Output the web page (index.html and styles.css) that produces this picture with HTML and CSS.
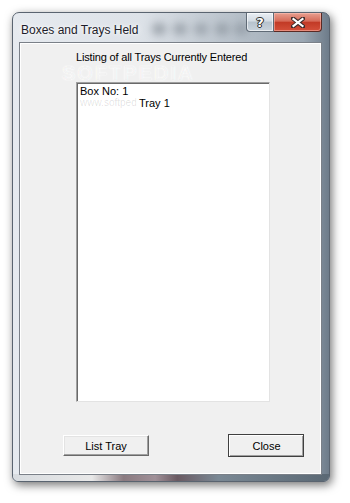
FILE: index.html
```html
<!DOCTYPE html>
<html>
<head>
<meta charset="utf-8">
<link rel="stylesheet" href="styles.css">
</head>
<body>
<div class="window">
  <div class="titlebar">
    <span class="title">Boxes and Trays Held</span>
    <div class="glass-blur"></div>
    <div class="caption-buttons">
      <div class="cap help"><span class="help-glyph">?</span></div>
      <div class="cap close">
        <svg width="14" height="11" viewBox="0 0 14 11">
          <path d="M2 1.5 L12 9.5 M12 1.5 L2 9.5" stroke="#3a2a2a" stroke-width="4.2" stroke-linecap="square"/>
          <path d="M2.5 2 L11.5 9 M11.5 2 L2.5 9" stroke="#ffffff" stroke-width="2.2" stroke-linecap="square"/>
        </svg>
      </div>
    </div>
  </div>
  <div class="client">
    <div class="heading">Listing of all Trays Currently Entered</div>
    <div class="wm-big">SOFTPEDIA</div>
    <div class="listbox">
      <div class="row">Box No: 1</div>
      <div class="row sub"><span class="wm-small">www.softped</span><span class="tray">Tray 1</span></div>
    </div>
    <div class="buttons">
      <button class="btn list">List Tray</button>
      <button class="btn default">Close</button>
    </div>
  </div>
</div>
</body>
</html>
```
FILE: styles.css
```css
html, body {
  margin: 0;
  padding: 0;
  background: #ffffff;
  width: 350px;
  height: 503px;
  overflow: hidden;
}
body {
  padding: 12px 0 0 12px;
  box-sizing: border-box;
}
.window {
  width: 318px;
  height: 470px;
  box-sizing: border-box;
  border: 1px solid #5a6470;
  border-radius: 7px 7px 6px 6px;
  background: linear-gradient(to right, #e6eaef 0%, #dde2e8 40%, #b8c1ca 70%, #9aa6b2 92%, #6e7c8a 100%);
  box-shadow: 2px 3px 10px rgba(0,0,0,0.55);
  display: flex;
  flex-direction: column;
  padding: 0 7px 6px 6px;
  position: relative;
}
.window::after {
  content: "";
  position: absolute;
  left: 0; right: 0; bottom: 0; height: 7px;
  border-radius: 0 0 6px 6px;
  background: linear-gradient(to right, #d8dce0 0%, #e8e8e8 25%, #8a7a80 35%, #a09098 45%, #6a5a62 52%, #7a8894 65%, #5a6874 100%);
  z-index: 0;
}
.titlebar {
  height: 29px;
  display: flex;
  align-items: flex-start;
  position: relative;
}
.title {
  font-family: "Liberation Sans", Arial, sans-serif;
  font-size: 12px;
  color: #1c1c2a;
  margin-top: 10px;
  margin-left: 2px;
  text-shadow: 0 0 6px #ffffff, 0 0 3px #ffffff;
  white-space: nowrap;
  position: relative;
  z-index: 1;
}
.glass-blur {
  position: absolute;
  left: 128px;
  top: 5px;
  width: 104px;
  height: 22px;
  background:
    radial-gradient(ellipse 11px 10px at 12px 11px, rgba(70,80,90,0.45), transparent),
    radial-gradient(ellipse 11px 10px at 33px 11px, rgba(70,80,90,0.4), transparent),
    radial-gradient(ellipse 11px 10px at 54px 11px, rgba(70,80,90,0.35), transparent),
    radial-gradient(ellipse 11px 10px at 75px 11px, rgba(70,80,90,0.35), transparent),
    radial-gradient(ellipse 11px 10px at 94px 11px, rgba(70,80,90,0.3), transparent);
  filter: blur(3px);
}
.caption-buttons {
  margin-left: auto;
  display: flex;
  margin-right: 0;
  position: relative;
  z-index: 1;
}
.cap {
  height: 19px;
  box-sizing: border-box;
  border: 1px solid #5f6a76;
  border-top: none;
  display: flex;
  align-items: center;
  justify-content: center;
}
.help {
  width: 28px;
  border-radius: 0 0 0 4px;
  background: linear-gradient(to bottom, #e9eef3 0%, #d3dbe3 45%, #b6c2cd 50%, #c9d3dc 100%);
  box-shadow: inset 0 0 0 1px rgba(255,255,255,0.6);
}
.help-glyph {
  font-family: "DejaVu Sans", sans-serif;
  font-weight: bold;
  font-size: 13px;
  color: #ffffff;
  text-shadow: 0 0 1px #222, 0 0 1px #222, 1px 0 0 #333, -1px 0 0 #333, 0 1px 0 #333, 0 -1px 0 #333;
  line-height: 1;
}
.close {
  width: 48px;
  border-left: none;
  border-color: #5a2a24;
  border-radius: 0 0 4px 0;
  background: linear-gradient(to bottom, #e8a090 0%, #d66a58 45%, #c23a26 52%, #d4503a 100%);
  box-shadow: inset 0 0 0 1px rgba(255,200,190,0.5);
}
.client {
  flex: 1;
  background: #f0f0f0;
  border: 1px solid #7a8088;
  box-shadow: inset 0 0 0 1px #ffffff;
  display: flex;
  flex-direction: column;
  align-items: flex-start;
  position: relative;
  z-index: 1;
  font-family: "Liberation Sans", Arial, sans-serif;
  font-size: 11px;
  color: #000;
}
.heading {
  margin-top: 8px;
  margin-left: 56px;
  line-height: 13px;
  letter-spacing: -0.16px;
}
.wm-big {
  position: absolute;
  left: 42px;
  top: 22px;
  font-size: 20px;
  line-height: 16px;
  font-weight: bold;
  letter-spacing: 2px;
  color: rgba(0,0,0,0.035);
  text-shadow: 0 0 2px rgba(255,255,255,0.9);
}
.listbox {
  margin-top: 18px;
  margin-left: 56px;
  width: 194px;
  height: 320px;
  box-sizing: border-box;
  background: #ffffff;
  border: 1px solid;
  border-color: #a0a0a0 #e3e3e3 #e3e3e3 #a0a0a0;
  box-shadow: inset 1px 1px 0 #696969;
  padding: 2px 0 0 3px;
  position: relative;
}
.row {
  line-height: 12px;
  height: 12px;
  white-space: nowrap;
}
.sub {
  display: flex;
  align-items: center;
}
.wm-small {
  width: 57px;
  overflow: hidden;
  color: rgba(0,0,0,0.12);
  font-size: 10px;
}
.tray {
  margin-left: 2px;
}
.buttons {
  margin-top: auto;
  margin-bottom: 17px;
  width: 100%;
  display: flex;
  align-items: center;
}
.btn {
  font-family: "Liberation Sans", Arial, sans-serif;
  font-size: 11px;
  color: #000;
  background: #f0f0f0;
  padding: 0;
  margin: 0;
  box-sizing: border-box;
  border: 1px solid;
  border-color: #ffffff #696969 #696969 #ffffff;
  box-shadow: inset -1px -1px 0 #a0a0a0, inset 1px 1px 0 #e3e3e3;
}
.list {
  margin-left: 43px;
  width: 86px;
  height: 21px;
}
.default {
  margin-left: 79px;
  width: 76px;
  height: 23px;
  outline: 1px solid #404040;
  outline-offset: -1px;
  border-color: #ffffff #696969 #696969 #ffffff;
  border-width: 2px 1px 1px 2px;
  box-shadow: inset -1px -1px 0 #a0a0a0;
}
```
